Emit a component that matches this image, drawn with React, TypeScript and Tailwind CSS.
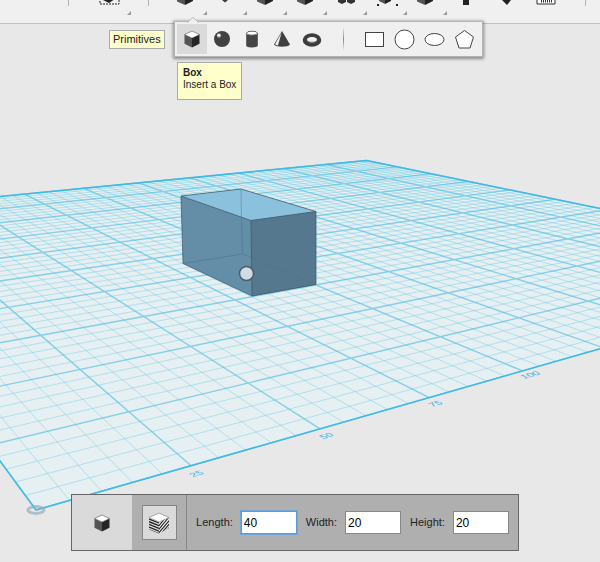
import React, { useState } from "react";

type Point = [number, number];

// Perspective of the work plane: one unit is 25mm
const project = (u: number, v: number): Point => {
  const d = 1 + 0.101 * u + 0.151 * v;
  return [(36 + 174.4 * u - 49 * v) / d, (510 + 2.7 * u + 2.8 * v) / d];
};

const line = (a: Point, b: Point) =>
  `M${a[0].toFixed(1)} ${a[1].toFixed(1)}L${b[0].toFixed(1)} ${b[1].toFixed(1)}`;

const GRID_SIZE = 10;
const STEPS = Array.from({ length: GRID_SIZE * 5 + 1 }, (_, i) => i);

const gridPath = (steps: number[]) =>
  steps
    .map((i) => {
      const t = i / 5;
      return line(project(t, 0), project(t, GRID_SIZE)) + line(project(0, t), project(GRID_SIZE, t));
    })
    .join("");

const minorPath = gridPath(STEPS.filter((i) => i % 5 !== 0));
const majorPath = gridPath(STEPS.filter((i) => i % 5 === 0));
const corners = [project(0, 0), project(GRID_SIZE, 0), project(GRID_SIZE, GRID_SIZE), project(0, GRID_SIZE)];
const outline = corners.map((p) => p.join(",")).join(" ");

const rulerLabels = [
  { text: "25", x: 193, y: 477 },
  { text: "50", x: 323, y: 439 },
  { text: "75", x: 432, y: 407 },
  { text: "100", x: 524, y: 379 },
];

const Scene: React.FC = () => (
  <svg
    className="absolute inset-0 h-full w-full"
    viewBox="0 0 600 562"
    preserveAspectRatio="xMidYMid slice"
    aria-hidden="true"
  >
    <polygon points={outline} fill="#e6eff1" />
    <path d={minorPath} stroke="#4dc0e6" strokeOpacity="0.34" strokeWidth="1" fill="none" />
    <path d={majorPath} stroke="#3fb9e4" strokeOpacity="0.6" strokeWidth="1.4" fill="none" />
    <polygon points={outline} fill="none" stroke="#3db9e6" strokeWidth="1.5" />
    <ellipse cx="36" cy="510" rx="8" ry="3.5" fill="none" stroke="#8fa9bd" strokeOpacity="0.65" strokeWidth="3" />
    {rulerLabels.map((l) => (
      <text
        key={l.text}
        transform={`matrix(0.95 -0.27 0.65 0.42 ${l.x} ${l.y})`}
        fontSize="11"
        fill="#2fb0e0"
        className="font-['Liberation_Sans',sans-serif]"
      >
        {l.text}
      </text>
    ))}

    {/* Box being placed */}
    <polygon points="181,196 241,189 316,211.500 316,284.500 252,296 183,263.500" fill="#648da8" />
    <polygon points="181,196 241,189 316,211.500 251,220.500" fill="#8bc1dd" />
    <polygon points="251,220.500 316,211.500 316,284.500 252,296" fill="#55788f" />
    <path d="M241 189.500L241.500 220" stroke="#6d9db9" strokeWidth="1" />
    <path d="M241.500 217L242.500 254L183 263.500M242.500 254L316 284.500" stroke="#4c718a" strokeOpacity="0.5" fill="none" />
    <path
      d="M181 196L241 189L316 211.500V284.500L252 296L183 263.500ZM181 196L251 220.500L316 211.500M251 220.500L252 296"
      stroke="#3a5568"
      strokeOpacity="0.7"
      strokeWidth="1"
      fill="none"
    />
    <circle cx="246.500" cy="273.500" r="7" fill="#d0dbe3" stroke="#4b5c69" strokeWidth="1.500" />
  </svg>
);

const BoxIcon = () => (
  <svg viewBox="0 0 20 20" className="h-5 w-5">
    <path d="M2.500 5.500L10 9v9.500L2.500 14.800Z" fill="#555" />
    <path d="M10 9l7.500-3.500v9.300L10 18.500Z" fill="#262626" />
    <path d="M2.500 5.500L10 2l7.500 3.500L10 9Z" fill="#fff" stroke="#555" strokeWidth="0.600" />
  </svg>
);

const SphereIcon = () => (
  <svg viewBox="0 0 20 20" className="h-5 w-5">
    <circle cx="10" cy="10" r="8" fill="#414141" />
    <circle cx="7" cy="6.500" r="2.200" fill="#999" />
    <circle cx="6.800" cy="6.300" r="1.400" fill="#fff" />
  </svg>
);

const CylinderIcon = () => (
  <svg viewBox="0 0 20 20" className="h-5 w-5">
    <path d="M4.200 4v12.500c0 2.600 11.600 2.600 11.600 0V4Z" fill="#454545" />
    <ellipse cx="10" cy="4.200" rx="5.400" ry="2" fill="#fff" stroke="#444" strokeWidth="0.800" />
  </svg>
);

const ConeIcon = () => (
  <svg viewBox="0 0 20 20" className="h-5 w-5">
    <path d="M10 2l8 13.500c-2 3-14 3-16 0Z" fill="#3f3f3f" />
    <path d="M9.600 3.500L3 15.200c.8 .7 1.800 1 3 1.200Z" fill="#eee" />
  </svg>
);

const TorusIcon = () => (
  <svg viewBox="0 0 20 20" className="h-5 w-5">
    <ellipse cx="10" cy="11" rx="7.200" ry="4.700" fill="#f0f0f0" stroke="#3d3d3d" strokeWidth="4.200" />
    <path d="M5.500 9.800c2-1.600 7-1.600 9 0" fill="none" stroke="#fff" strokeWidth="1" />
    <path d="M5.500 11.500c1 2.300 8 2.300 9 0" fill="none" stroke="#777" strokeWidth="0.800" />
  </svg>
);

const HatchedBoxIcon = () => (
  <svg viewBox="0 0 24 24" className="h-6 w-6 shrink-0">
    <defs>
      <clipPath id="hatch-left">
        <path d="M2 6.500L12 11v11.500L2 18.500Z" />
      </clipPath>
      <clipPath id="hatch-right">
        <path d="M12 11l10-4.500V17L12 22.500Z" />
      </clipPath>
    </defs>
    <path
      clipPath="url(#hatch-left)"
      d="M2 8l10 4M2 10.700l10 4M2 13.400l10 4M2 16.100l10 4M2 18.800l10 4"
      stroke="#222"
      strokeWidth="1.300"
    />
    <path d="M12 11l10-4.500V17L12 22.500Z" fill="#eee" />
    <path
      clipPath="url(#hatch-right)"
      d="M10 17L19 6M10 20.500L22 6M10 24L24 7.500M13 24L26 8.500M16 24L27 11"
      stroke="#222"
      strokeWidth="1.100"
    />
    <path d="M2 6.500L12 2l10 4.500L12 11Z" fill="#fff" stroke="#888" strokeWidth="0.700" />
  </svg>
);

// Only the lower part of the main toolbar is in view
const cube = (
  <>
    <path d="M-8-3.500L0 0v5L-8 1.500Z" fill="#555" />
    <path d="M0 0l8-3.500V1L0 5Z" fill="#222" />
  </>
);

const mainTools: { label: string; menu: boolean; icon: React.ReactNode }[] = [
  { label: "Primitives", menu: true, icon: cube },
  { label: "Sketch", menu: true, icon: <path d="M-3-1L0 1.500L3-1" fill="none" stroke="#333" strokeWidth="1.500" /> },
  { label: "Construct", menu: true, icon: cube },
  { label: "Modify", menu: true, icon: cube },
  {
    label: "Pattern",
    menu: true,
    icon: <path d="M-7-2h8v4l-4 2l-4-2ZM2-2h8v4l-4 2l-4-2Z" fill="#333" />,
  },
  {
    label: "Grouping",
    menu: true,
    icon: (
      <>
        <path d="M-6-3L0 0v4L-6 1Z" fill="#555" />
        <path d="M0 0l6-3V1L0 4Z" fill="#222" />
        <path d="M-8 4h2v2h-2ZM11 4h2v2h-2Z" fill="#222" />
      </>
    ),
  },
  { label: "Combine", menu: true, icon: cube },
  { label: "Text", menu: false, icon: <path d="M-2-3h6v8h-6Z" fill="#222" /> },
  { label: "Snap", menu: false, icon: <path d="M-3 0L4-3l2 3l-4 5Z" fill="#222" /> },
  {
    label: "Measure",
    menu: false,
    icon: (
      <>
        <path d="M-8-5h18v9h-18Z" fill="#fff" stroke="#333" strokeWidth="1" />
        <path d="M-4 1h11" stroke="#333" strokeWidth="3" strokeDasharray="1 1" />
      </>
    ),
  },
];

const MenuMark = () => (
  <svg viewBox="0 0 4 4" className="absolute -right-0.5 bottom-2 h-1 w-1">
    <path d="M4 0v4H0Z" fill="#999" />
  </svg>
);

const ToolButton = ({ label, menu, icon }: { label: string; menu: boolean; icon: React.ReactNode }) => (
  <button type="button" aria-label={label} className="relative h-full w-10 shrink-0">
    <svg viewBox="-20 0 40 23" className="h-full w-full">
      {icon}
    </svg>
    {menu && <MenuMark />}
  </button>
);

const solids = [
  { label: "Box", icon: <BoxIcon /> },
  { label: "Sphere", icon: <SphereIcon /> },
  { label: "Cylinder", icon: <CylinderIcon /> },
  { label: "Cone", icon: <ConeIcon /> },
  { label: "Torus", icon: <TorusIcon /> },
];

const sketches = [
  { label: "Rectangle", shape: <rect x="1.500" y="3.500" width="18" height="14" /> },
  { label: "Circle", shape: <circle cx="10.500" cy="10.500" r="9.500" /> },
  { label: "Ellipse", shape: <ellipse cx="10.500" cy="10.500" rx="9.500" ry="6" /> },
  { label: "Polygon", shape: <path d="M10.500 1.500L19.500 8L16 19H5L1.500 8Z" /> },
];

const App: React.FC = () => {
  const [selected, setSelected] = useState("Box");
  const [size, setSize] = useState({ Length: "40", Width: "20", Height: "20" });

  const handleChange = (e: React.ChangeEvent<HTMLInputElement>) => {
    setSize({ ...size, [e.target.name]: e.target.value });
  };

  return (
    <div className="relative flex min-h-screen flex-col overflow-hidden bg-[#e8e8e8] font-['Liberation_Sans',Arial,sans-serif] text-[11px] text-[#222]">
      <Scene />

      {/* Main toolbar */}
      <header className="relative flex h-6 items-stretch overflow-hidden border-b border-[#bfbfbf] bg-[#f0f0f0]">
        <div className="ml-[68px] h-1.5 w-px bg-[#b5b5b5]" />
        <button type="button" aria-label="Select" className="relative ml-5 h-full w-10">
          <svg viewBox="-20 0 40 23" className="h-full w-full">
            <path d="M-6-4h12v3L0 3L-6 0Z" fill="#222" />
            <path d="M-9-2V4H10V-2" fill="none" stroke="#222" strokeWidth="1" strokeDasharray="2 1" />
          </svg>
          <MenuMark />
        </button>
        <div className="ml-[19px] h-1.5 w-px bg-[#b5b5b5]" />
        <div className="ml-4 flex">
          {mainTools.map((t) => (
            <ToolButton key={t.label} {...t} />
          ))}
        </div>
        <div className="ml-5 h-1.5 w-px bg-[#b5b5b5]" />
      </header>

      {/* Primitives fly-out */}
      <div className="relative -mt-[3px] flex items-start">
        <span className="mt-[9px] ml-[109px] border border-[#aaa] bg-[#ffffcc] px-[3px] leading-[17px]">
          Primitives
        </span>
        <div className="relative ml-[9px] flex h-9 items-center border border-[#b4b4b4] bg-[#f0f0f0] px-0.5 shadow-[0_1px_3px_1px_rgba(0,0,0,0.4)]">
          <svg viewBox="0 0 12 6" className="absolute -top-[5px] left-3 h-1.5 w-3">
            <path d="M0 6L6 .5L12 6Z" fill="#f0f0f0" />
            <path d="M0 5.500L6 .5L12 5.500" fill="none" stroke="#bbb" strokeWidth="1" />
          </svg>
          {solids.map((s) => (
            <button
              key={s.label}
              type="button"
              aria-label={s.label}
              onClick={() => setSelected(s.label)}
              className={`flex h-[30px] w-[30px] items-center justify-center ${
                selected === s.label ? "bg-[#dadada]" : ""
              }`}
            >
              {s.icon}
            </button>
          ))}
          <div className="mx-4 h-6 w-px bg-linear-to-b from-transparent via-[#888] to-transparent" />
          {sketches.map((s) => (
            <button
              key={s.label}
              type="button"
              aria-label={s.label}
              onClick={() => setSelected(s.label)}
              className="flex h-[30px] w-[30px] items-center justify-center"
            >
              <svg viewBox="0 0 21 21" className="h-[21px] w-[21px]" fill="#fff" stroke="#444" strokeWidth="1">
                {s.shape}
              </svg>
            </button>
          ))}
        </div>
      </div>

      <div className="relative mt-[5px] ml-[177px] h-[38px] self-start border border-[#aaa] bg-[#ffffcc] px-[5px] pt-1 text-[10px] leading-3">
        <p className="font-bold">Box</p>
        <p>Insert a Box</p>
      </div>

      {/* Dimensions panel */}
      <div className="relative mt-auto mb-[11px] flex justify-center pr-[10px]">
        <form
          onSubmit={(e) => e.preventDefault()}
          className="flex h-[57px] items-stretch border border-[#666] bg-[#afafaf]"
        >
          <button type="button" aria-label="Solid" className="flex w-[60px] items-center justify-center bg-[#dadada]">
            <BoxIcon />
          </button>
          <div className="flex w-[55px] items-center justify-center border-r border-[#888]">
            <button
              type="button"
              aria-label="Texture"
              className="flex h-[35px] w-[35px] items-center justify-center border border-[#858585] bg-[#dadada]"
            >
              <HatchedBoxIcon />
            </button>
          </div>
          <div className="flex items-center gap-[9px] px-[9px]">
            {(["Length", "Width", "Height"] as const).map((name) => (
              <div key={name} className="flex items-center gap-2">
                <label htmlFor={name}>{name}:</label>
                <input
                  id={name}
                  name={name}
                  value={size[name]}
                  onChange={handleChange}
                  autoFocus={name === "Length"}
                  className="h-[23px] w-14 border border-[#888] bg-white px-0.5 text-xs text-black outline-none focus:border-[#5b9bd8] focus:ring-1 focus:ring-[#6ea6dc]"
                />
              </div>
            ))}
          </div>
        </form>
      </div>
    </div>
  );
};

export default App;
